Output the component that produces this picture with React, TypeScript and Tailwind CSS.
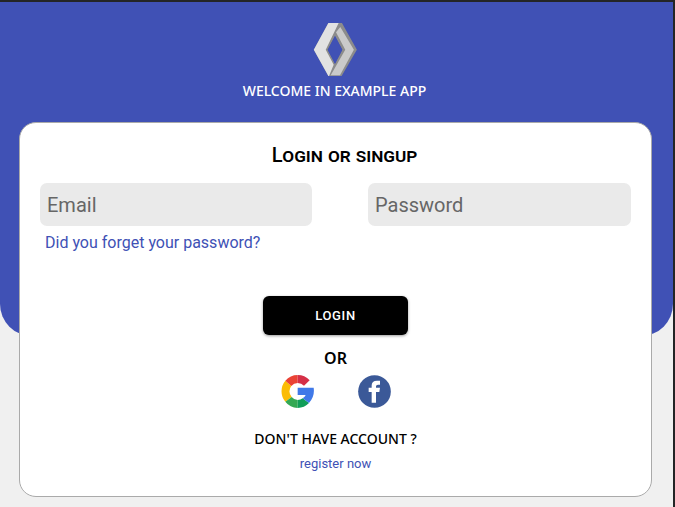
function BrandLogo() {
  return (
    <svg viewBox="0 0 132 160" className="h-[53px] w-11" role="img" aria-label="Brand logo">
      <path fillRule="evenodd" fill="#8c8c8c" d="M46 0H87L132 81L86 160H46L2 81ZM66 39L44 81L66 123L88 81Z" />
      <path fill="#e2e2e2" d="M46 0H77L38 81L62 126L48 160H46L2 81Z" />
      <path fill="#cacaca" d="M69 28L82 12L123 81L81 158H53L97 81Z" />
      <path fill="#4051b5" d="M66 39L44 81L66 123L88 81Z" />
    </svg>
  );
}

function GoogleLogo() {
  return (
    <svg viewBox="0 0 99 99" className="size-[33px]" aria-hidden="true">
      <path fill="#fbbc05" d="M13 17A49 49 0 0 0 13 80L32 66A25 25 0 0 1 31 33Z" />
      <path fill="#ea4335" d="M13 17A49 49 0 0 1 50 0V24A25 25 0 0 0 31 33Z" />
      <path fill="#d52f47" d="M50 0A49 49 0 0 1 86 16L69 32A26 26 0 0 0 50 24Z" />
      <path fill="#34a853" d="M13 80A49 49 0 0 0 50 99V75A25 25 0 0 1 32 66Z" />
      <path fill="#109d58" d="M50 99A49 49 0 0 0 84 84L65 70Q59 75 50 75Z" />
      <path fill="#4079e8" d="M50 38H98Q102 65 84 84L65 70Q72 65 74 60H50Z" />
    </svg>
  );
}

function FacebookLogo() {
  return (
    <svg viewBox="0 0 99 99" className="size-[33px]" aria-hidden="true">
      <circle cx="49.5" cy="49.5" r="49" fill="#3b5998" />
      <path fill="#fff" d="M41 83V51H32V38H41V31Q41 17 57 17H66V29H60Q54 29 54 34V38H66L64 51H54V83Z" />
    </svg>
  );
}

const field =
  "h-[43px] w-full min-w-0 rounded-[7px] bg-[#eaeaea] px-[7px] text-xl text-black outline-none placeholder:text-[#666]";
const heading = "font-['Noto_Sans','Open_Sans',sans-serif] leading-6";

export default function App() {
  return (
    <div className="min-h-screen border-t-2 border-r-2 border-[#242526] bg-[#f0f0f0] pb-[10px] font-[Roboto,sans-serif]">
      <header className="flex h-[334px] flex-col items-center rounded-b-[32px] bg-[#4051b5] pt-[21px] pr-1">
        <BrandLogo />
        <h1 className={`${heading} mt-[3px] text-sm font-medium text-white`}>WELCOME IN EXAMPLE APP</h1>
      </header>

      <main className="relative mr-[21px] -mt-[214px] ml-[19px] h-[375px] rounded-[17px] border border-[#aaa] bg-white px-5">
        <form className="flex flex-col items-center" onSubmit={(e) => e.preventDefault()}>
          <h2 className="mt-4 pl-[18px] text-xl leading-8 font-medium text-black [font-variant:small-caps]">
            Login or singup
          </h2>
          <div className="mt-3 grid w-full grid-cols-[272fr_263fr] gap-14">
            <input className={field} type="email" placeholder="Email" aria-label="Email" />
            <input className={field} type="password" placeholder="Password" aria-label="Password" />
          </div>
          <a href="#forgot" className="mt-[5px] ml-[5px] self-start text-base leading-6 text-[#4051b5]">
            Did you forget your password?
          </a>
          <button
            type="submit"
            className="mt-[41px] h-[39px] w-[145px] rounded-md bg-black text-[13px] font-medium tracking-wider text-white shadow-[0_1px_3px_#0006]"
          >
            LOGIN
          </button>
        </form>

        <div className="flex flex-col items-center">
          <p className={`${heading} mt-[11px] text-base font-semibold text-black`}>OR</p>
          <div className="mt-[5px] flex gap-11">
            <button type="button" aria-label="Continue with Google">
              <GoogleLogo />
            </button>
            <button type="button" aria-label="Continue with Facebook">
              <FacebookLogo />
            </button>
          </div>
          <p className={`${heading} mt-[19px] text-sm font-medium text-black`}>DON'T HAVE ACCOUNT ?</p>
          <a href="#register" className="mt-[3px] text-[13px] leading-5 text-[#4051b5]">
            register now
          </a>
        </div>
      </main>
    </div>
  );
}
